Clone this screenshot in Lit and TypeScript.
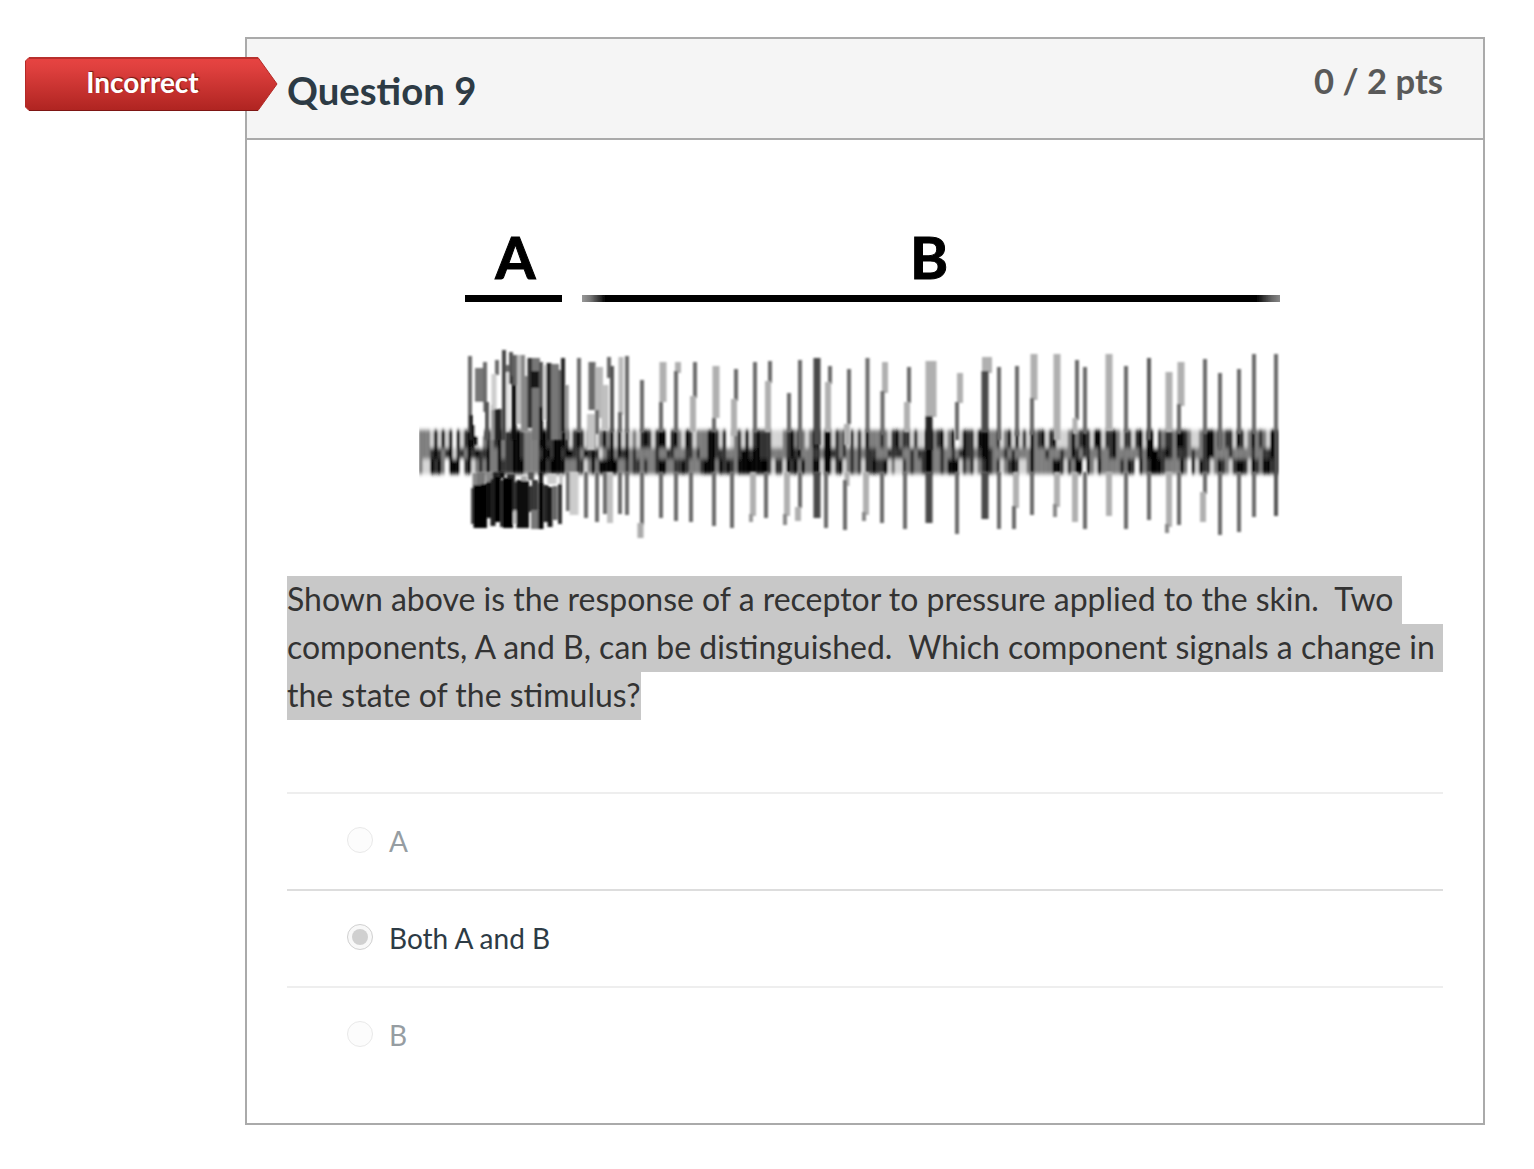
import { LitElement, html, svg, css } from 'lit';
import { customElement, property } from 'lit/decorators.js';
import { classMap } from 'lit/directives/class-map.js';

// [x, top, bottom, width, shade]
type Bar = [number, number, number, number, string];

const D = '#6a6a6a';
const L = '#b0b0b0';
const K = '#484848';

const spikes: Bar[] = [
  // burst under A
  [470, 356, 432, 4, D], [479, 368, 402, 8, '#777'], [485, 362, 412, 4, D],
  [471, 415, 440, 4, '#222'], [475, 425, 445, 4, '#111'], [479, 402, 436, 8, '#fff'], [487, 402, 440, 4, '#555'],
  [493, 405, 440, 4, '#999'],
  [497, 360, 375, 4, D], [494, 374, 410, 5, '#ccc'], [498, 409, 440, 7, '#222'],
  [504, 350, 440, 4, '#444'], [508, 365, 372, 5, D], [508, 372, 432, 3, '#ddd'],
  [511, 352, 384, 4, '#555'], [514, 376, 440, 5, '#111'], [515, 355, 385, 4, '#666'],
  [519, 355, 424, 4, '#bbb'], [523, 355, 432, 4, '#888'], [526, 376, 432, 4, '#888'],
  [530, 358, 428, 5, '#333'], [536, 358, 440, 8, '#777'], [535, 371, 388, 8, '#161616'],
  [541, 362, 440, 4, '#555'], [541, 407, 440, 4, '#111'], [545, 365, 420, 3, '#ccc'],
  [549, 363, 440, 5, '#222'], [555, 364, 440, 8, '#777'], [560, 370, 440, 4, '#666'],
  [563, 358, 432, 4, '#222'], [567, 385, 440, 3, '#888'],
  [579, 358, 432, 4, D], [592, 362, 410, 7, D], [599, 367, 418, 8, '#b8b8b8'],
  [591, 414, 450, 8, '#c4c4c4'], [597, 410, 434, 4, D], [605, 385, 430, 7, '#c0c0c0'],
  [609, 357, 378, 4, D], [612, 366, 432, 4, '#555'], [621, 357, 415, 5, '#bbb'],
  [620, 412, 432, 4, D], [627, 356, 432, 4, D],
  // above the baseline
  [642, 380, 432, 4, D], [663, 362, 402, 7, L], [661, 402, 432, 4, D],
  [678, 362, 373, 6, L], [676, 371, 432, 4, D], [695, 362, 398, 4, D], [693, 396, 432, 6, L],
  [716, 366, 418, 7, L], [714, 418, 432, 4, D], [736, 369, 401, 4, D], [734, 399, 436, 6, L],
  [755, 362, 432, 4, D], [770, 361, 383, 4, D], [768, 381, 432, 6, L],
  [789, 393, 432, 4, D], [800, 360, 450, 4, D], [817, 358, 445, 7, K],
  [830, 366, 384, 4, D], [828, 382, 432, 6, L], [849, 369, 424, 4, D], [847, 424, 445, 6, L],
  [867.5, 358, 432, 4, D], [885, 362, 393, 6, L], [882.5, 391, 435, 4, D],
  [909, 367, 403, 4, D], [907, 402, 432, 6, L], [931, 361, 417, 11, L], [929, 416, 450, 7, '#222'],
  [960, 373, 403, 6, L], [957, 402, 440, 4, D], [987, 357, 373, 10, L], [985, 371, 432, 7, K],
  [999, 367, 440, 4, D], [1017, 366, 436, 4, D], [1034, 354, 400, 7, L], [1032, 398, 435, 4, D],
  [1057, 354, 440, 7, L], [1077, 360, 420, 4, D], [1075, 418, 434, 5, L], [1085, 367, 434, 4, D],
  [1109, 354, 430, 7, L], [1126, 366, 432, 4, D], [1149, 358, 440, 4, '#5a5a5a'],
  [1169, 372, 432, 7, L], [1181, 362, 406, 7, L], [1179, 404, 434, 4, D], [1205, 359, 434, 4, D],
  [1220, 373, 450, 4, D], [1239, 369, 434, 4, D], [1254, 354, 434, 4, D], [1276, 354, 434, 4, D],
  // below the baseline
  [568, 472, 511, 4, D], [574, 472, 515, 9, '#ccc'], [586, 472, 518, 4, D], [597, 472, 522, 4, D],
  [605, 472, 514, 4, D], [610, 472, 523, 6, '#c0c0c0'], [620, 472, 514, 4, D], [627, 472, 515, 4, D],
  [642, 472, 525, 4, D], [640.5, 523, 538, 6, '#aaa'], [661, 472, 518, 4, D], [676, 472, 521, 4, D],
  [691, 472, 522, 4, D], [714, 472, 526, 4, D], [732, 472, 528, 4, D],
  [753, 472, 516, 6, L], [751, 514, 522, 4, '#999'], [766, 472, 518, 4, D],
  [787, 472, 516, 6, L], [785, 514, 525, 4, '#888'], [800, 472, 508, 4, D], [798, 507, 521, 6, L],
  [817, 472, 518, 7, K], [826, 472, 528, 4, D], [847, 472, 486, 5, L], [845, 480, 530, 4, D],
  [866, 472, 515, 6, L], [864, 512, 521, 4, '#888'], [882, 472, 523, 4, D], [905, 472, 529, 4, D],
  [929, 472, 523, 7, K], [957, 472, 534, 4, D], [985, 472, 519, 7, K], [999, 472, 529, 4, D],
  [1016, 472, 508, 6, L], [1014, 506, 529, 4, D], [1032, 472, 515, 4, D],
  [1057, 472, 507, 6, L], [1055, 504, 517, 4, '#888'], [1075, 472, 522, 6, L], [1085, 472, 529, 4, D],
  [1109, 472, 516, 6, L], [1126, 472, 529, 4, D], [1149, 472, 520, 4, D],
  [1169, 472, 527, 6, L], [1167, 524, 533, 4, '#888'], [1179, 472, 525, 4, D],
  [1205, 472, 494, 4, D], [1203, 492, 522, 6, L], [1220, 472, 535, 4, D],
  [1239, 472, 532, 4, D], [1254, 472, 517, 4, D], [1276, 430, 516, 4, '#555'],
];

// dense block below the baseline, left to right
const burst: Bar[] = [
  [476, 473, 488, 7, '#888'], [481, 472, 486, 8, '#777'], [489, 472, 482, 7, '#888'],
  [496, 472, 480, 7, '#222'], [502, 472, 478, 5, '#111'], [511, 474, 482, 8, '#333'],
  [531, 472, 480, 6, '#555'], [524, 476, 482, 6, '#aaa'], [541, 472, 486, 4, '#111'],
  [552, 474, 484, 9, '#ccc'], [561, 474, 484, 3, '#bbb'],
  [472.5, 488, 524, 3, '#444'], [478, 485, 528, 9, '#000'], [484, 484, 528, 6, '#060606'],
  [488.5, 482, 518, 5, '#111'], [493, 479, 526, 5, '#1c1c1c'], [498, 477, 522, 6, '#060606'],
  [502, 480, 527, 4, '#2a2a2a'], [508, 478, 528, 10, '#000'], [515, 482, 512, 4, '#333'],
  [515, 510, 524, 3, '#bbb'], [519, 480, 528, 5, '#111'], [525, 481, 528, 8, '#080808'],
  [531, 486, 512, 5, '#333'], [535, 480, 512, 6, '#383838'], [535, 510, 529, 8, '#777'],
  [541, 483, 529, 5, '#060606'], [546, 485, 522, 5, '#222'], [550, 487, 527, 5, '#181818'],
  [555, 486, 520, 5, '#666'], [560, 484, 524, 4, '#333'],
];

// baseline noise, one digit per column: 0 is white, 4 is black
const noise = [
  '22214141404134410232342334432222443344431343122124241413121343134403421431222'
  + '44314012314134333111234242124414413231313142223213423313114423412401433144422'
  + '312414131423413411124234314413342133134144032332443211234423233143124232144',
  '22234323413324343342242334432222344344344332434312342434232222232233222332322'
  + '44333222344344333222234342223324433232323233322233332232334422322323433234432'
  + '223232222422232223224323322322342222223244433432333232234422223222223223344',
  '21143420444034123242243334442222443444422233124244444223233232234422334322234'
  + '44243432444444443133143424224414413412323133433412113232234422324441323123432'
  + '312343112422222443132440421422222324304234443222242041433124321344314324434',
];
const shades = ['#ffffff', '#d4d4d4', '#7c7c7c', '#303030', '#000000'];
const rows = [[430, 448], [448, 459], [459, 474]];
const step = 3.75;

@customElement('spike-trace')
export class SpikeTrace extends LitElement {
  static styles = css`
    :host {
      display: block;
      width: 892px;
      height: 332px;
    }
    svg {
      display: block;
    }
    .mark {
      font: 700 58px Lato, sans-serif;
      fill: #000;
      stroke: #000;
      stroke-width: 1;
    }
  `;

  bar([x, y1, y2, w, shade]: Bar) {
    return svg`<rect x=${x - w / 2} y=${y1} width=${w} height=${y2 - y1} fill=${shade}></rect>`;
  }

  noiseRow(line: string, row: number) {
    const [y1, y2] = rows[row];
    return [...line].map((n, i) =>
      this.bar([419 + step * (i + 0.5), y1, y2, step + 0.2, shades[Number(n)]])
    );
  }

  render() {
    return html`
      <svg width="892" height="332" viewBox="419 220 892 332">
        <defs>
          <filter id="soft" x="-2%" y="-5%" width="104%" height="110%">
            <feGaussianBlur stdDeviation="0.9 1.1"></feGaussianBlur>
          </filter>
          <filter id="smear" x="0" y="-20%" width="102%" height="140%">
            <feGaussianBlur stdDeviation="0.9 2"></feGaussianBlur>
          </filter>
          <filter id="edge" x="-2%" y="-20%" width="104%" height="140%">
            <feGaussianBlur stdDeviation="0.6"></feGaussianBlur>
          </filter>
          <linearGradient id="fade">
            <stop offset="0" stop-color="#999"></stop>
            <stop offset="0.012" stop-color="#777"></stop>
            <stop offset="0.034" stop-color="#000"></stop>
            <stop offset="0.966" stop-color="#000"></stop>
            <stop offset="0.988" stop-color="#666"></stop>
            <stop offset="1" stop-color="#888"></stop>
          </linearGradient>
        </defs>
        <g filter="url(#edge)">
          <text class="mark" x="515.5" y="279" text-anchor="middle">A</text>
          <text class="mark" x="929" y="279" text-anchor="middle">B</text>
          <rect x="465" y="295" width="97" height="7" fill="#000"></rect>
          <rect x="582" y="295" width="698" height="7" fill="url(#fade)"></rect>
        </g>
        <g filter="url(#smear)">${noise.map((line, row) => this.noiseRow(line, row))}</g>
        <g filter="url(#soft)">
          ${spikes.map((s) => this.bar(s))}
          ${burst.map((s) => this.bar(s))}
        </g>
      </svg>
    `;
  }
}

@customElement('answer-row')
export class AnswerRow extends LitElement {
  static styles = css`
    :host {
      display: block;
    }
    .answer {
      display: flex;
      align-items: center;
      gap: 16px;
      height: 93px;
      padding: 0 0 2px 60px;
      border-top: 2px solid #eee;
      color: #969da2;
      font-size: 28px;
      line-height: 40px;
    }
    .radio {
      box-sizing: border-box;
      display: grid;
      place-items: center;
      width: 26px;
      height: 26px;
      margin-bottom: 2px;
      border: 1px solid #e9e9e9;
      border-radius: 50%;
      background: #fcfcfc;
    }
    .selected {
      border-top-color: #ddd;
      color: #2d3b45;
    }
    .selected .radio {
      border-color: #d0d0d0;
      background: #f8f8f8;
    }
    .dot {
      width: 16px;
      height: 16px;
      border-radius: 50%;
      background: #d0d0d0;
    }
    .label {
      padding-top: 1px;
    }
  `;

  @property() label = '';
  @property({ type: Boolean }) selected = false;

  render() {
    return html`
      <div class=${classMap({ answer: true, selected: this.selected })}>
        <span class="radio">${this.selected ? html`<span class="dot"></span>` : ''}</span>
        <span class="label">${this.label}</span>
      </div>
    `;
  }
}

@customElement('app-root')
export class AppRoot extends LitElement {
  static styles = css`
    :host {
      display: block;
      box-sizing: border-box;
      height: 1169px;
      padding: 37px 49px 0 245px;
      background: #fff;
      color: #2d3b45;
      font-family: Lato, sans-serif;
    }
    .question {
      position: relative;
      box-sizing: border-box;
      height: 1088px;
      border: 2px solid #aaa;
    }
    .header {
      display: flex;
      justify-content: space-between;
      box-sizing: border-box;
      height: 101px;
      padding: 0 40px;
      border-bottom: 2px solid #aaa;
      background: #f5f5f5;
      font-weight: 700;
    }
    .name {
      padding-top: 27px;
      font-size: 38.3px;
      line-height: 48px;
    }
    .points {
      padding-top: 18px;
      color: #595959;
      font-size: 34.6px;
      line-height: 48px;
    }
    .flag {
      position: absolute;
      left: -222px;
      top: 18px;
      display: grid;
      width: 253px;
      height: 55px;
    }
    .flag svg,
    .verdict {
      grid-area: 1 / 1;
    }
    .verdict {
      padding-right: 18px;
      color: #fff;
      font-size: 28px;
      font-weight: 700;
      line-height: 51px;
      text-align: center;
      text-shadow: 1px -1px 1px #701a17;
    }
    .body {
      padding: 80px 40px 0;
    }
    spike-trace {
      margin-left: 132px;
    }
    .prompt {
      margin: 24px 0 72px;
      color: #333;
      font-size: 31.98px;
      line-height: 46px;
    }
    .line {
      display: block;
      width: max-content;
      padding-bottom: 2px;
      background: #c8c8c8;
      white-space: pre;
    }
  `;

  name = 'Question 9';
  points = '0 / 2 pts';
  prompt = [
    'Shown above is the response of a receptor to pressure applied to the skin.\u00a0 Two ',
    'components, A and B, can be distinguished.\u00a0 Which component signals a change in ',
    'the state of the stimulus?',
  ];
  answers = [
    { label: 'A', selected: false },
    { label: 'Both A and B', selected: true },
    { label: 'B', selected: false },
  ];

  flag() {
    return html`
      <svg width="253" height="55" viewBox="0 0 253 55">
        <defs>
          <linearGradient id="red" x1="0" y1="0" x2="0" y2="1">
            <stop offset="0" stop-color="#e84442"></stop>
            <stop offset="0.2" stop-color="#df403e"></stop>
            <stop offset="1" stop-color="#af2421"></stop>
          </linearGradient>
        </defs>
        <path d="M4 .5H233L252 27L233 53.5H4L.5 50V4Z" fill="url(#red)" stroke="#b32a27"></path>
        <path d="M4 53.5H233" stroke="#7e1614"></path>
        <path d="M4 1H233" stroke="#b8302d" stroke-width="2"></path>
      </svg>
    `;
  }

  render() {
    return html`
      <div class="question">
        <div class="header">
          <span class="name">${this.name}</span>
          <span class="points">${this.points}</span>
        </div>
        <div class="flag">
          ${this.flag()}
          <span class="verdict">Incorrect</span>
        </div>
        <div class="body">
          <spike-trace></spike-trace>
          <div class="prompt">
            ${this.prompt.map((line) => html`<span class="line">${line}</span>`)}
          </div>
          ${this.answers.map(
            (a) => html`<answer-row .label=${a.label} ?selected=${a.selected}></answer-row>`
          )}
        </div>
      </div>
    `;
  }
}
